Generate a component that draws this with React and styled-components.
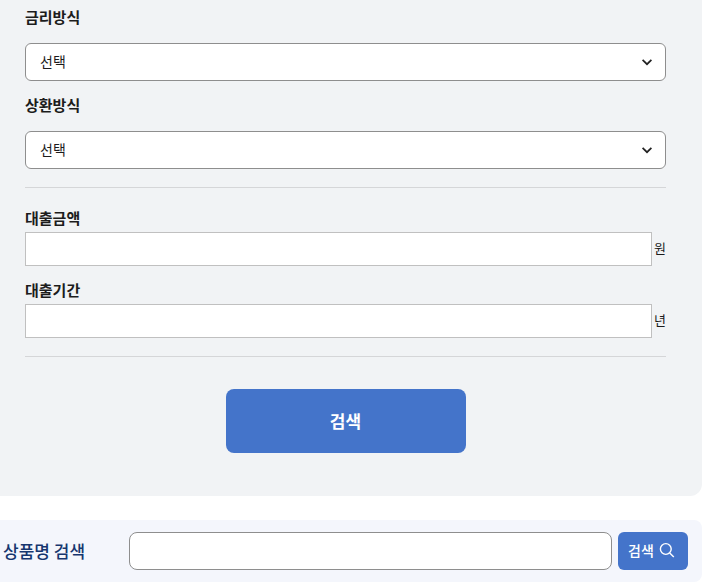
import React from 'react'
import styled, { createGlobalStyle } from 'styled-components'

const GlobalStyle = createGlobalStyle`
  *, *:before, *:after {
    box-sizing: border-box;
  }

  body {
    margin: 0;
    background: #fff;
    color: #1c1c1c;
    font-family: "Noto Sans CJK KR", sans-serif;
    font-size: 14px;
  }

  button, input, select {
    font-family: inherit;
  }
`;

const Page = styled.main`
  display: flex;
  flex-direction: column;
  gap: 24px;
`;

const Panel = styled.form`
  padding: 8px 36px 43px 25px;
  background: #f1f3f5;
  border-bottom-right-radius: 12px;
`;

const Group = styled.div`
  display: flex;
  flex-direction: column;
  gap: 15px;
  padding-bottom: 18px;
  border-bottom: 1px solid #d5d6d8;

  & + & {
    padding-top: 21px;
  }
`;

const Field = styled.div`
  display: flex;
  flex-direction: column;
  gap: ${props => props.$gap};
`;

const Label = styled.label`
  font-size: 15px;
  font-weight: 700;
  line-height: 18px;
`;

const SelectBox = styled.div`
  display: grid;
  align-items: center;

  & > * {
    grid-area: 1 / 1;
  }

  svg {
    justify-self: end;
    margin-right: 12px;
    pointer-events: none;
  }
`;

const Select = styled.select`
  width: 100%;
  height: 38px;
  padding: 0 36px 2px 14px;
  border: 1px solid #8e8e8e;
  border-radius: 6px;
  background: #fff;
  color: #1c1c1c;
  font-size: 14px;
  appearance: none;
`;

const UnitRow = styled.div`
  display: flex;
  align-items: center;
  gap: 2px;
`;

const AmountInput = styled.input`
  flex: 1;
  min-width: 0;
  height: 34px;
  padding: 0 10px;
  border: 1px solid #c0c0c0;
  border-radius: 0;
  background: #fff;
  font-size: 14px;
`;

const Unit = styled.span`
  padding-bottom: 2px;
  font-size: 13px;
  line-height: 20px;
`;

const SubmitBtn = styled.button`
  display: block;
  width: 240px;
  height: 64px;
  margin: 32px auto 0;
  padding: 0 0 2px;
  border: 0;
  border-radius: 8px;
  background: #4474ca;
  color: #fff;
  font-size: 17px;
  font-weight: 700;
  cursor: pointer;
`;

const SearchBar = styled.form`
  display: flex;
  align-items: center;
  gap: 6px;
  padding: 12px 14px 12px 3px;
  background: #f4f6fc;
  border-radius: 0 8px 8px 0;
`;

const SearchLabel = styled.label`
  width: 120px;
  color: #16366f;
  font-size: 17px;
  font-weight: 500;
  line-height: 24px;
`;

const SearchInput = styled.input`
  flex: 1;
  min-width: 0;
  height: 38px;
  padding: 0 14px;
  border: 1px solid #8e8e8e;
  border-radius: 8px;
  background: #fff;
  font-size: 14px;
`;

const SearchBtn = styled.button`
  display: flex;
  align-items: center;
  gap: 5px;
  width: 70px;
  height: 38px;
  padding: 0 10px 2px;
  border: 0;
  border-radius: 6px;
  background: #4474ca;
  color: #fff;
  font-size: 14px;
  font-weight: 500;
  cursor: pointer;
`;

const Chevron = () => (
  <svg width="14" height="14" viewBox="0 0 14 14" fill="none" aria-hidden="true">
    <path d="M2.6 4.8L7 9.2L11.4 4.8" stroke="#222" strokeWidth="1.7" />
  </svg>
)

const Magnifier = () => (
  <svg width="16" height="16" viewBox="0 0 16 16" fill="none" stroke="#fff" strokeWidth="1.4" aria-hidden="true">
    <circle cx="6.8" cy="7" r="5.4" />
    <path d="M10.7 10.9L14.8 15" />
  </svg>
)

const selects = [
  { id: 'rateType', label: '금리방식' },
  { id: 'repayType', label: '상환방식' },
]

const amounts = [
  { id: 'loanAmount', label: '대출금액', unit: '원' },
  { id: 'loanPeriod', label: '대출기간', unit: '년' },
]

function App() {
    const onSubmit = (e) => e.preventDefault()

    return (
        <Page>
            <GlobalStyle />
            <Panel onSubmit={onSubmit}>
                <Group>
                    {selects.map(({ id, label }) => (
                        <Field key={id} $gap="17px">
                            <Label htmlFor={id}>{label}</Label>
                            <SelectBox>
                                <Select id={id} name={id}>
                                    <option value="">선택</option>
                                </Select>
                                <Chevron />
                            </SelectBox>
                        </Field>
                    ))}
                </Group>
                <Group>
                    {amounts.map(({ id, label, unit }) => (
                        <Field key={id} $gap="5px">
                            <Label htmlFor={id}>{label}</Label>
                            <UnitRow>
                                <AmountInput type="text" id={id} name={id} />
                                <Unit>{unit}</Unit>
                            </UnitRow>
                        </Field>
                    ))}
                </Group>
                <SubmitBtn type="submit">검색</SubmitBtn>
            </Panel>
            <SearchBar onSubmit={onSubmit}>
                <SearchLabel htmlFor="productName">상품명 검색</SearchLabel>
                <SearchInput type="text" id="productName" name="productName" />
                <SearchBtn type="submit">검색 <Magnifier /></SearchBtn>
            </SearchBar>
        </Page>
    )
}

export default App
